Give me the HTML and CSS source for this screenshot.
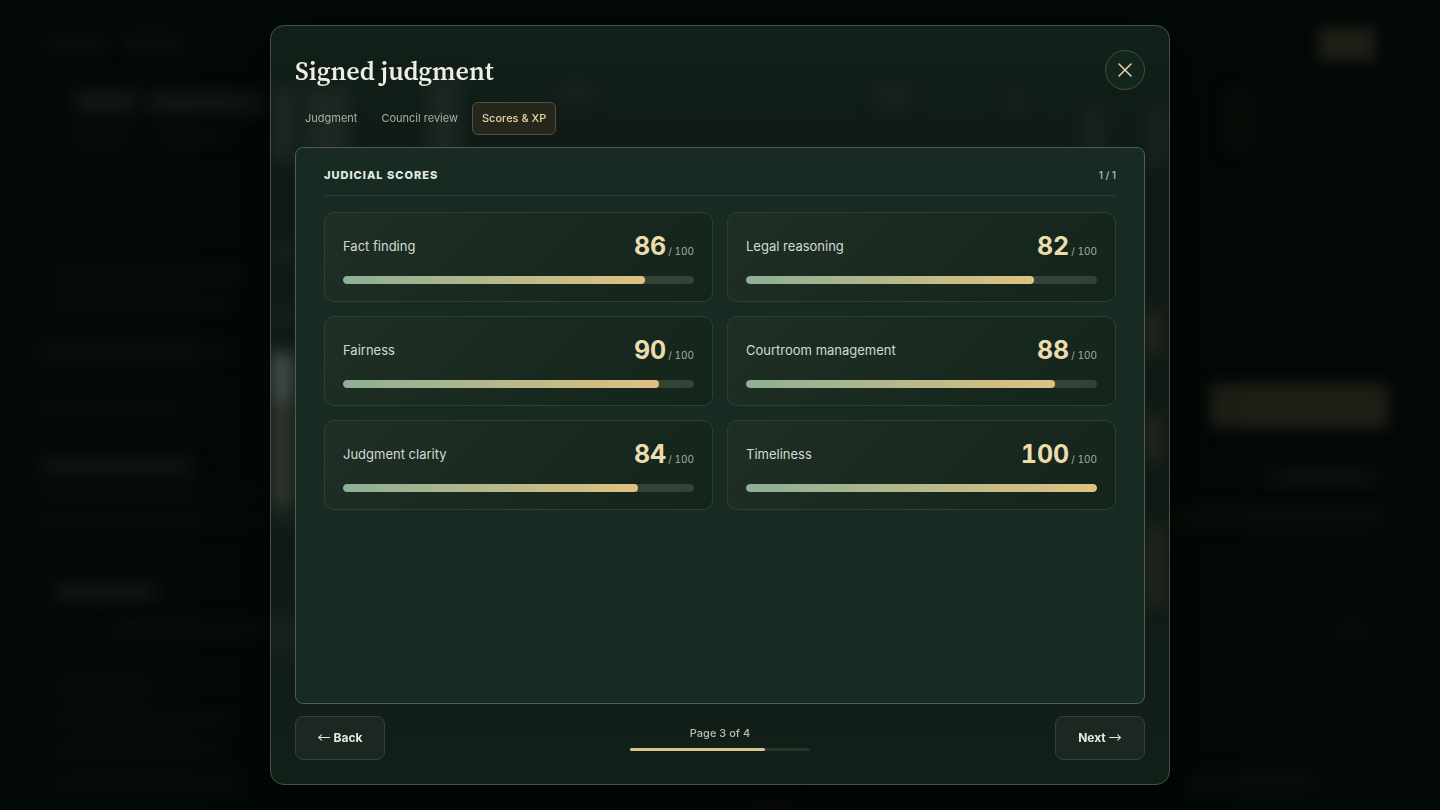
FILE: index.html
```html
<!DOCTYPE html>
<html lang="en">
<head>
  <meta charset="UTF-8" />
  <meta name="viewport" content="width=device-width, initial-scale=1" />
  <title>Signed judgment</title>
  <link rel="stylesheet" href="styles.css">
</head>
<body>

  <!-- Dimmed page behind the dialog -->
  <svg class="backdrop" viewBox="0 0 1440 810" preserveAspectRatio="none" aria-hidden="true">
    <g class="ghost-text">
      <rect x="48" y="36" width="58" height="14" opacity=".5" />
      <rect x="75" y="90" width="62" height="24" />
      <rect x="148" y="92" width="120" height="22" />
      <rect x="70" y="132" width="60" height="12" opacity=".4" />
      <rect x="162" y="132" width="66" height="12" opacity=".4" />
      <rect x="55" y="266" width="190" height="16" opacity=".4" />
      <rect x="55" y="296" width="180" height="12" opacity=".4" />
      <rect x="40" y="400" width="136" height="12" opacity=".3" />
      <rect x="40" y="459" width="152" height="14" />
      <rect x="40" y="486" width="230" height="10" opacity=".3" />
      <rect x="40" y="516" width="230" height="10" opacity=".3" />
      <rect x="56" y="583" width="100" height="18" />
      <rect x="1270" y="470" width="105" height="14" opacity=".7" />
      <rect x="1334" y="622" width="36" height="14" opacity=".3" />
      <rect x="1190" y="774" width="125" height="18" opacity=".4" />
      <rect x="745" y="796" width="50" height="12" opacity=".4" />
    </g>
    <g class="ghost-line">
      <rect x="122" y="34" width="62" height="16" />
      <rect x="36" y="344" width="192" height="16" />
      <rect x="115" y="622" width="155" height="14" />
      <rect x="56" y="680" width="94" height="14" />
      <rect x="56" y="714" width="180" height="10" />
      <rect x="56" y="745" width="170" height="10" />
      <rect x="56" y="778" width="190" height="10" />
      <rect x="1170" y="510" width="214" height="16" />
      <rect x="1228" y="90" width="18" height="60" />
    </g>
    <g class="ghost-button">
      <rect x="1319" y="27" width="56" height="34" />
      <rect x="1210" y="384" width="178" height="44" />
    </g>
  </svg>

  <div class="overlay">
    <section class="modal" role="dialog" aria-modal="true" aria-labelledby="modalTitle">
      <svg class="modal-glow" viewBox="0 0 898 758" preserveAspectRatio="none" aria-hidden="true">
        <rect class="glow-dim" x="0" y="60" width="24" height="76" />
        <rect class="glow-dim" x="34" y="60" width="44" height="76" />
        <rect class="glow-dim" x="157" y="50" width="32" height="90" />
        <rect class="glow-faint" x="288" y="56" width="34" height="22" />
        <rect class="glow-faint" x="605" y="58" width="36" height="22" />
        <rect class="glow-faint" x="735" y="64" width="20" height="18" />
        <rect class="glow-faint" x="812" y="80" width="22" height="50" />
        <rect class="glow-faint" x="876" y="80" width="22" height="60" />
        <rect class="glow-dim" x="0" y="222" width="24" height="8" />
        <rect class="glow-dim" x="0" y="284" width="24" height="8" />
        <rect class="glow-bright" x="0" y="326" width="22" height="50" />
        <rect class="glow-mid" x="0" y="376" width="22" height="106" />
        <rect class="glow-faint" x="0" y="488" width="24" height="12" />
        <rect class="glow-faint" x="0" y="590" width="24" height="40" />
        <rect class="glow-warm" x="874" y="285" width="16" height="44" />
        <rect class="glow-warm" x="874" y="388" width="16" height="48" />
        <rect class="glow-warm" x="876" y="500" width="18" height="80" />
      </svg>

      <header class="modal-header">
        <h1 id="modalTitle">Signed judgment</h1>
        <button class="close" type="button" aria-label="Close">
          <svg viewBox="0 0 14 14" aria-hidden="true"><path d="M1 1l12 12M13 1L1 13" /></svg>
        </button>
      </header>

      <nav class="tabs">
        <button class="tab" type="button">Judgment</button>
        <button class="tab" type="button">Council review</button>
        <button class="tab active" type="button">Scores &amp; XP</button>
      </nav>

      <div class="panel">
        <div class="panel-head">
          <h2>Judicial scores</h2>
          <span class="panel-count">1 / 1</span>
        </div>
        <div class="scores" id="scores"></div>
      </div>

      <footer class="modal-footer">
        <button class="nav-button" type="button"><span class="arrow">←</span> Back</button>
        <div class="pager">
          <span>Page 3 of 4</span>
          <div class="pager-track"><div class="pager-fill" style="width: 75%"></div></div>
        </div>
        <button class="nav-button" type="button">Next <span class="arrow">→</span></button>
      </footer>
    </section>
  </div>

  <script>
    const scores = [
      { label: 'Fact finding', value: 86 },
      { label: 'Legal reasoning', value: 82 },
      { label: 'Fairness', value: 90 },
      { label: 'Courtroom management', value: 88 },
      { label: 'Judgment clarity', value: 84 },
      { label: 'Timeliness', value: 100 }
    ];

    const container = document.getElementById('scores');

    scores.forEach(score => {
      const card = document.createElement('article');
      card.className = 'score-card';
      card.innerHTML = `
        <div class="score-row">
          <span class="score-label">${score.label}</span>
          <span class="score-value"><strong>${score.value}</strong><small>/ 100</small></span>
        </div>
        <div class="bar"><div class="bar-fill" style="width: ${score.value}%"></div></div>
      `;
      container.appendChild(card);
    });
  </script>

</body>
</html>
```
FILE: styles.css
```css
* {
  box-sizing: border-box;
}

body {
  margin: 0;
  background: #030907;
  color: #e9eadf;
  font-family: Inter, sans-serif;
}

button {
  font-family: inherit;
  cursor: pointer;
}

/* Page behind */
.backdrop {
  position: fixed;
  inset: 0;
  width: 100%;
  height: 100%;
}

.ghost-text {
  fill: #111715;
  filter: blur(8px);
}

.ghost-line {
  fill: #0b0f0a;
  filter: blur(8px);
}

.ghost-button {
  fill: #1f1e16;
  filter: blur(7px);
}

.overlay {
  position: relative;
  display: flex;
  justify-content: center;
  height: 100vh;
  padding: 25px;
}

/* Modal */
.modal {
  position: relative;
  display: flex;
  flex-direction: column;
  gap: 12px;
  width: 100%;
  max-width: 900px;
  padding: 24px;
  border: 1px solid #4f503b;
  border-radius: 14px;
  background: linear-gradient(#11211a, #101a15 16%, #101a15 70%, #112019);
  box-shadow: 0 20px 60px rgba(0, 0, 0, 0.6);
  overflow: hidden;
}

.modal-glow {
  position: absolute;
  inset: 0;
  width: 100%;
  height: 100%;
  filter: blur(8px);
}

.glow-faint {
  fill: #19221d;
}

.glow-dim {
  fill: #1d2621;
}

.glow-mid {
  fill: #2f352f;
}

.glow-bright {
  fill: #444b47;
}

.glow-warm {
  fill: #25261c;
}

.modal-header,
.tabs,
.panel,
.modal-footer {
  position: relative;
}

.modal-header {
  display: flex;
  align-items: center;
  justify-content: space-between;
}

.modal-header h1 {
  margin: 0;
  padding-top: 2px;
  font-family: "Source Serif 4", "Noto Serif", "Liberation Serif", serif;
  font-size: 26px;
  font-weight: 600;
  line-height: 38px;
  color: #efeee2;
}

.close {
  display: grid;
  place-items: center;
  width: 40px;
  height: 40px;
  padding: 0;
  border: 1px solid #40503f;
  border-radius: 50%;
  background: #13261d;
}

.close svg {
  width: 14px;
  height: 14px;
  fill: none;
  stroke: #e6d5a5;
  stroke-width: 1.5;
  stroke-linecap: round;
}

.tabs {
  display: flex;
  gap: 4px;
}

.tab {
  height: 33px;
  padding: 0 9px 2px;
  border: 1px solid transparent;
  border-radius: 6px;
  background: none;
  color: #a9b0a8;
  font-size: 11px;
  font-weight: 400;
}

.tab.active {
  border-color: #56523a;
  background: #25271d;
  color: #e8d3a2;
  font-weight: 500;
}

.panel {
  flex: 1;
  padding: 16px 28px;
  border: 1px solid #4b6053;
  border-radius: 8px;
  background: #182b22;
}

.panel-head {
  display: flex;
  align-items: center;
  justify-content: space-between;
  height: 32px;
  margin-bottom: 16px;
  padding-bottom: 10px;
  border-bottom: 1px solid #2b3e34;
}

.panel-head h2 {
  margin: 0;
  color: #e3ebe1;
  font-size: 11px;
  font-weight: 800;
  letter-spacing: 1px;
  text-transform: uppercase;
}

.panel-count {
  color: #a9b3a9;
  font-size: 10px;
  font-weight: 600;
}

.scores {
  display: grid;
  grid-template-columns: 1fr 1fr;
  gap: 14px;
}

.score-card {
  padding: 17px 18px;
  border: 1px solid #2d3f35;
  border-radius: 10px;
  background: linear-gradient(135deg, #1f2f25, #13241b);
}

.score-row {
  display: flex;
  align-items: center;
  justify-content: space-between;
  height: 32px;
  margin-bottom: 14px;
}

.score-label {
  color: #d3dbd1;
  font-size: 13px;
}

.score-value {
  font-variant-numeric: tabular-nums;
}

.score-value strong {
  color: #ebdcae;
  font-size: 25px;
  font-weight: 700;
}

.score-value small {
  margin-left: 2px;
  color: #a3aea3;
  font-size: 10px;
}

.bar {
  height: 8px;
  border-radius: 4px;
  background: #354236;
  overflow: hidden;
}

.bar-fill {
  height: 100%;
  border-radius: 4px;
  background: linear-gradient(90deg, #8daf95, #e0c180);
}

.modal-footer {
  display: flex;
  align-items: center;
  justify-content: space-between;
}

.nav-button {
  display: flex;
  align-items: center;
  justify-content: center;
  gap: 3px;
  width: 90px;
  height: 44px;
  padding: 0 0 2px;
  border: 1px solid #354039;
  border-radius: 8px;
  background: #1c2721;
  color: #e9eadf;
  font-size: 12px;
  font-weight: 700;
}

.arrow {
  font-family: "Noto Sans CJK JP", sans-serif;
  font-size: 13px;
  font-weight: 400;
  line-height: 16px;
}

.pager {
  display: flex;
  flex-direction: column;
  gap: 7px;
  width: 180px;
  color: #b6bfb5;
  font-size: 11px;
  font-weight: 500;
  line-height: 16px;
  text-align: center;
}

.pager-track {
  height: 3px;
  border-radius: 2px;
  background: #26362c;
}

.pager-fill {
  height: 100%;
  border-radius: 2px;
  background: #d8c58e;
}
```
